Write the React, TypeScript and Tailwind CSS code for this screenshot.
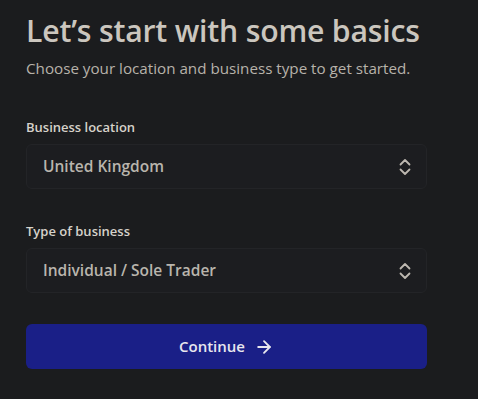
import { ArrowRight } from "lucide-react";

function SelectField({ label, value }: { label: string; value: string }) {
  return (
    <div className="flex flex-col gap-[9px]">
      <span className="text-[13px] font-semibold leading-4 text-[#d6d2ca]">{label}</span>
      <div className="flex h-[45px] items-center justify-between rounded-md border border-[#232427] bg-[#1c1d20] pl-[16px] pr-[14px]">
        <span className="text-[15.5px] font-semibold text-[#b9b5ad]">{value}</span>
        <svg width="14" height="20" viewBox="0 0 14 20" fill="none" stroke="#bdb8b0" strokeWidth="1.8" strokeLinecap="round" strokeLinejoin="round">
          <path d="M2.5 7.5l4.5-4.5 4.5 4.5" />
          <path d="M2.5 12.5l4.5 4.5 4.5-4.5" />
        </svg>
      </div>
    </div>
  );
}

export default function App() {
  return (
    <div className="min-h-[399px] w-[478px] bg-[#1b1c1e] pl-[26px] pr-[51px] pt-[11px] font-['Open_Sans',sans-serif]">
      <h1 className="text-[30.2px] font-semibold leading-10 tracking-[-0.2px] text-[#cbc6be]">
        Let’s start with some basics
      </h1>
      <p className="mt-[7px] text-[15.2px] leading-5 text-[#b7b2aa]">
        Choose your location and business type to get started.
      </p>
      <div className="mt-[41px] flex flex-col gap-[34px]">
        <SelectField label="Business location" value="United Kingdom" />
        <SelectField label="Type of business" value="Individual / Sole Trader" />
      </div>
      <button
        type="button"
        className="mt-[31px] flex h-[45px] w-full items-center justify-center gap-[9px] rounded-md bg-[#1a1f87] text-[15px] font-semibold text-[#e8e6ee]"
      >
        Continue
        <ArrowRight size={20} strokeWidth={2.2} />
      </button>
    </div>
  );
}
